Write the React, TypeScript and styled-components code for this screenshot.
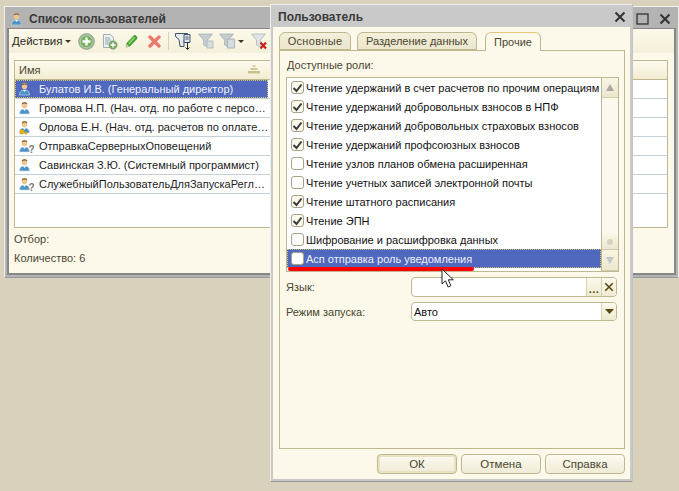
import React from 'react';
import styled, { createGlobalStyle } from 'styled-components';

const Global = createGlobalStyle`
    html, body { margin:0; padding:0; background:#d8d2bd; }
    body { width:679px; height:491px; overflow:hidden; font-family:"Liberation Sans", Arial, sans-serif; font-size:11px; color:#1c1c1c; }
    * { box-sizing:border-box; }
`

const Desktop = styled.div`
    position:relative;
    width:679px;
    height:491px;
    overflow:hidden;
`

const Frame = styled.div<{ $shade: string }>`
    position:absolute;
    display:flex;
    flex-direction:column;
    background:${props => props.$shade};
    border:1px solid #f1f1ec;
    border-bottom-color:#9a9a9a;
`

const BackWindow = styled(Frame)`
    left:4px;
    top:6px;
    width:675px;
    height:272px;
    padding:0 2px 2px 2px;
`

const Dialog = styled(Frame)`
    left:270px;
    top:4px;
    width:362px;
    height:478px;
    padding:0 2px 2px 2px;
    border-right:none;
    box-shadow:1px 0 0 #c4c4c4;
`

const TitleBar = styled.div<{ $height: number; $inset: number }>`
    height:${props => props.$height}px;
    flex:none;
    display:flex;
    align-items:center;
    padding:2px ${props => props.$inset}px 0 ${props => props.$inset}px;
    font-weight:bold;
    font-size:12px;
    color:#3a3a3a;
`

const TitleText = styled.span`
    flex:1;
    margin-left:3px;
`

const Pane = styled.div`
    flex:1;
    min-height:0;
    display:flex;
    flex-direction:column;
    background:#fcf9ea;
`

const BackPane = styled(Pane)`
    border:1px solid #878787;
    border-width:1px 2px 2px 2px;
`

const Toolbar = styled.div`
    height:24px;
    flex:none;
    display:flex;
    align-items:center;
    padding-left:3px;
    background:linear-gradient(#fcf9ea, #f4f0da);
    color:#2c2a1c;
`

const ToolSlot = styled.span<{ $width: number }>`
    width:${props => props.$width}px;
    flex:none;
    display:flex;
    align-items:center;
    justify-content:center;
`

const MenuLabel = styled.span`
    display:flex;
    align-items:center;
    gap:3px;
    width:64px;
    font-size:11.5px;
`

const Caret = styled.i`
    display:inline-block;
    width:0;
    height:0;
    border:3px solid transparent;
    border-top:3px solid #3a3620;
    border-bottom:none;
`

const Divider = styled.span`
    width:1px;
    height:18px;
    background:#d6d2bc;
    flex:none;
`

const Table = styled.div`
    margin:7px 6px 0 5px;
    height:168px;
    flex:none;
    border:1px solid #bdb88f;
    background:#fff;
    overflow:hidden;
`

const TableHead = styled.div`
    height:19px;
    background:linear-gradient(#fdfbee, #f2ecd0);
    border-bottom:1px solid #bdb88f;
    color:#4a4630;
`

const HeadCell = styled.div`
    width:253px;
    height:100%;
    display:flex;
    align-items:center;
    justify-content:space-between;
    padding:0 8px 1px 4px;
`

const UserRow = styled.div`
    height:19px;
    border-bottom:1px solid #c6d0d8;
`

const UserCell = styled.div<{ $selected?: boolean }>`
    width:253px;
    height:100%;
    display:flex;
    align-items:center;
    white-space:nowrap;
    overflow:hidden;
    padding-left:3px;
    gap:5px;
    background:${props => props.$selected ? '#5068bd' : '#fff'};
    color:${props => props.$selected ? '#f0f2fa' : '#1c1c1c'};
    outline:${props => props.$selected ? '1px dotted #d8c860' : 'none'};
    outline-offset:-1px;
`

const Footer = styled.div`
    padding:5px 5px 0 5px;
    display:flex;
    flex-direction:column;
    gap:6px;
    color:#4a4630;
`

const FooterLine = styled.div`
    height:13px;
    line-height:13px;
`

const WinButton = styled.span<{ $gap?: number }>`
    display:flex;
    width:16px;
    justify-content:center;
    margin-left:${props => props.$gap ?? 0}px;
`

const DialogPane = styled(Pane)`
    padding:5px 5px 0 6px;
`

const Tabs = styled.div`
    display:flex;
    height:19px;
    flex:none;
    position:relative;
    z-index:1;
`

const Tab = styled.div<{ $width: number; $gap: number; $track?: number; $active?: boolean }>`
    width:${props => props.$width}px;
    margin-right:${props => props.$gap}px;
    height:${props => props.$active ? 19 : 18}px;
    display:flex;
    align-items:center;
    justify-content:center;
    letter-spacing:${props => props.$track ?? 0}px;
    border:1px solid #bdb88f;
    border-top-color:${props => props.$active ? '#e6c87a' : '#bdb88f'};
    border-bottom:${props => props.$active ? 'none' : '1px solid #bdb88f'};
    border-radius:6px 6px 0 0;
    background:${props => props.$active ? '#fcf9ea' : 'linear-gradient(#f3efda, #ebe6cc)'};
    color:#4a4630;
`

const TabPanel = styled.div`
    height:399px;
    margin-top:-1px;
    flex:none;
    border:1px solid #bdb88f;
    padding:8px 5px 0 6px;
    display:flex;
    flex-direction:column;
`

const Caption = styled.div`
    height:13px;
    line-height:13px;
    color:#4a4630;
    margin-left:1px;
`

const RoleBox = styled.div`
    margin-top:5px;
    height:195px;
    width:333px;
    flex:none;
    display:flex;
    border:1px solid #bdb88f;
    background:#fff;
    position:relative;
`

const RoleList = styled.div`
    flex:1;
    min-width:0;
`

const RoleRow = styled.div<{ $selected?: boolean }>`
    height:19px;
    display:flex;
    align-items:center;
    padding-left:4px;
    gap:2px;
    white-space:nowrap;
    background:${props => props.$selected ? '#5068bd' : 'transparent'};
    color:${props => props.$selected ? '#eef0f8' : '#111'};
    outline:${props => props.$selected ? '1px dotted #c8c070' : 'none'};
    outline-offset:-1px;
`

const Check = styled.span<{ $filled?: boolean }>`
    width:13px;
    height:13px;
    flex:none;
    display:flex;
    align-items:center;
    justify-content:center;
    border:1px solid #a8a386;
    border-radius:3px;
    background:${props => props.$filled ? '#fbf9ee' : '#fff'};
`

const ScrollTrack = styled.div`
    width:17px;
    flex:none;
    display:flex;
    flex-direction:column;
    border-left:1px solid #bdb88f;
    background:#faf8ef;
`

const ScrollCap = styled.div<{ $height: number }>`
    height:${props => props.$height}px;
    flex:none;
    display:flex;
    align-items:center;
    justify-content:center;
    background:linear-gradient(#f8f5e4, #ece7ce);
    border-bottom:1px solid #cfcaa8;
`

const ScrollFill = styled.div`
    flex:1;
`

const Arrow = styled.i<{ $down?: boolean }>`
    display:block;
    width:0;
    height:0;
    border:4px solid transparent;
    ${props => props.$down
        ? 'border-top:7px solid #c6c6c6; border-bottom:none;'
        : 'border-bottom:7px solid #a8a8a0; border-top:none;'}
`

const ThumbGrip = styled.i`
    display:block;
    width:6px;
    height:6px;
    border-radius:50%;
    background:#d4d2c4;
`

const Underline = styled.div`
    position:absolute;
    left:1px;
    top:189px;
    width:186px;
    height:4px;
    border-radius:2px;
    background:#f00;
`

const Cursor = styled.svg`
    position:absolute;
    left:441px;
    top:268px;
`

const FieldRow = styled.div<{ $top: number; $height: number }>`
    display:flex;
    align-items:center;
    margin-top:${props => props.$top}px;
    height:${props => props.$height}px;
    flex:none;
`

const FieldLabel = styled.div`
    width:125px;
    flex:none;
    color:#4a4630;
`

const Field = styled.div`
    width:206px;
    height:100%;
    display:flex;
    align-items:stretch;
    border:1px solid #bdb88f;
    border-radius:4px;
    background:#fff;
    overflow:hidden;
`

const FieldValue = styled.div`
    flex:1;
    padding-left:2px;
    display:flex;
    align-items:center;
    color:#111;
`

const FieldButton = styled.div`
    width:15px;
    flex:none;
    display:flex;
    align-items:center;
    justify-content:center;
    border-left:1px solid #d6d2b4;
    background:linear-gradient(#fbf9ec, #efead2);
    font-weight:bold;
    color:#5a4a10;
`

const Dots = styled.span`
    letter-spacing:0.5px;
    margin-top:3px;
`

const ButtonBar = styled.div`
    display:flex;
    justify-content:flex-end;
    gap:4px;
    margin:5px 0 0 0;
    flex:none;
`

const PushButton = styled.div<{ $default?: boolean }>`
    width:80px;
    height:20px;
    display:flex;
    align-items:center;
    justify-content:center;
    border:1px solid #bdb88f;
    border-radius:4px;
    background:linear-gradient(#fdfbf0, #efebd6);
    box-shadow:${props => props.$default ? 'inset 0 0 0 2px #e8e2c0' : 'none'};
    color:#4a4630;
    font-size:11.5px;
`

const UserIcon = ({ kind }: { kind?: 'key' | 'ask' }) => (
    <svg width="16" height="16" viewBox="0 0 16 16" style={{ flex: 'none' }}>
        <path d="M1.500 14c0-3.500 2-5 4-5h2c2 0 4 1.500 4 5z" fill="#4d94c4" stroke="#cfe3f0" strokeWidth=".6" />
        <path d="M5 9l1.500 2L8 9z" fill="#fff" />
        <ellipse cx="6.500" cy="5" rx="2.700" ry="3.200" fill="#f2c48e" />
        <path d="M3.700 4.600C3.500 1.800 9.500 1.300 9.300 4.600 8 3.200 5.300 3.200 3.700 4.600z" fill="#7a5a30" />
        {kind === 'key' && <path d="M2 15V11h4v2h3v2H7v-1H5v1z" fill="#eeb410" stroke="#b88a08" strokeWidth=".4" />}
        {kind === 'ask' && <text x="10.500" y="15" fontSize="10" fontWeight="bold" fontFamily="Liberation Sans" fill="#7b7b70">?</text>}
    </svg>
)

const PlusIcon = () => (
    <svg width="17" height="17" viewBox="0 0 17 17">
        <circle cx="8.500" cy="8.500" r="7.800" fill="#a9c4a0" stroke="#8a9a80" />
        <circle cx="8.500" cy="8.500" r="5.500" fill="#74b05e" />
        <path d="M8.500 4.500v8M4.500 8.500h8" stroke="#fff" strokeWidth="2.400" />
    </svg>
)

const CopyIcon = () => (
    <svg width="17" height="17" viewBox="0 0 17 17">
        <path d="M2.500 1.500h7l3 3v10h-10z" fill="#eef1f2" stroke="#9fb0b4" />
        <path d="M4 5h5M4 7h6M4 9h4M4 11h3" stroke="#8ea4b0" />
        <circle cx="12" cy="12" r="4.200" fill="#77ad62" stroke="#8a9a80" strokeWidth=".6" />
        <path d="M12 9.500v5M9.500 12h5" stroke="#fff" strokeWidth="1.400" />
    </svg>
)

const PencilIcon = () => (
    <svg width="14" height="14" viewBox="0 0 14 14">
        <path d="M1 13l1-4 7-7.500c1-.8 3.500 1.500 3 3L5 12z" fill="#3fa02e" stroke="#2e7a24" strokeWidth=".5" />
        <path d="M3 9l6-6.500 1.500 1.500L4.500 10.500z" fill="#86d060" />
        <path d="M1 13l.8-3 2.200 2.200z" fill="#e4d8a0" />
    </svg>
)

const CrossIcon = () => (
    <svg width="13" height="13" viewBox="0 0 13 13">
        <path d="M2 2l9 9M11 2l-9 9" stroke="#ec7a6c" strokeWidth="3.400" strokeLinecap="round" />
    </svg>
)

const FunnelIcon = ({ color, badge }: { color: string; badge?: 'list' | 'clear' | 'edit' }) => (
    <svg width="18" height="18" viewBox="0 0 18 18">
        <path d="M1.500 2h14l-5 6v7l-4-2V8z" fill={color} stroke="#9aa4a8" strokeWidth=".6" />
        {badge === 'list' && <path d="M9.500 7h7v9h-7z" fill="#d6dde0" stroke="#aab4b8" />}
        {badge === 'edit' && <path d="M10 9h6v7h-6z" fill="#d6dde0" stroke="#b4bcc0" />}
        {badge === 'clear' && <path d="M10.500 10.500l5.500 6M16 10.500l-5.500 6" stroke="#c8201c" strokeWidth="2.200" />}
    </svg>
)

const SetupIcon = () => (
    <svg width="18" height="19" viewBox="0 0 18 19">
        <path d="M1.500 1.500h12v3l-3.500 4v6H6l-1-7-3.500-3z" fill="#e6ecef" stroke="#3c5268" />
        <path d="M10 2.500h6v8h-6z" fill="#dfe7ec" stroke="#3c5268" />
        <path d="M11.500 5h3M11.500 7h3" stroke="#3c5268" />
        <path d="M13.500 10v7M11.500 15.500l2 2 2-2" stroke="#222" fill="none" />
    </svg>
)

const SortIcon = () => (
    <svg width="12" height="9" viewBox="0 0 12 9">
        <path d="M4.500 0h3v2h-3z" fill="#d9d2a6" />
        <path d="M2.500 3h7v2h-7z" fill="#cfc796" />
        <path d="M0 6h12v2.500H0z" fill="#c8c08c" />
    </svg>
)

const TickMark = () => (
    <svg width="11" height="10" viewBox="0 0 11 10">
        <path d="M1.500 5l3 3 5-6.500" fill="none" stroke="#3a3a3a" strokeWidth="2" />
    </svg>
)

const SmallX = ({ color, size }: { color: string; size: number }) => (
    <svg width={size} height={size} viewBox="0 0 12 12">
        <path d="M1.500 1.500l9 9M10.500 1.500l-9 9" stroke={color} strokeWidth="2" />
    </svg>
)

const users: { name: string; kind?: 'key' | 'ask' }[] = [
    { name: 'Булатов И.В. (Генеральный директор)' },
    { name: 'Громова Н.П. (Нач. отд. по работе с персо…' },
    { name: 'Орлова Е.Н. (Нач. отд. расчетов по оплате…', kind: 'key' },
    { name: 'ОтправкаСерверныхОповещений', kind: 'ask' },
    { name: 'Савинская З.Ю. (Системный программист)' },
    { name: 'СлужебныйПользовательДляЗапускаРегл…', kind: 'ask' },
];

const roles: { name: string; on: boolean }[] = [
    { name: 'Чтение удержаний в счет расчетов по прочим операциям', on: true },
    { name: 'Чтение удержаний добровольных взносов в НПФ', on: true },
    { name: 'Чтение удержаний добровольных страховых взносов', on: true },
    { name: 'Чтение удержаний профсоюзных взносов', on: true },
    { name: 'Чтение узлов планов обмена расширенная', on: false },
    { name: 'Чтение учетных записей электронной почты', on: false },
    { name: 'Чтение штатного расписания', on: true },
    { name: 'Чтение ЭПН', on: true },
    { name: 'Шифрование и расшифровка данных', on: false },
    { name: 'Асп отправка роль уведомления', on: false },
];

const App = () => (
    <Desktop>
        <Global />
        <BackWindow $shade="#b3b3b3">
            <TitleBar $height={21} $inset={3}>
                <UserIcon />
                <TitleText>Список пользователей</TitleText>
                <WinButton>
                    <svg width="14" height="14" viewBox="0 0 14 14">
                        <rect x="1" y="2" width="11" height="10" fill="none" stroke="#333" strokeWidth="1.300" />
                    </svg>
                </WinButton>
                <WinButton $gap={6}><SmallX color="#333" size={12} /></WinButton>
            </TitleBar>
            <BackPane>
                <Toolbar>
                    <MenuLabel>Действия <Caret /></MenuLabel>
                    <ToolSlot $width={20}><PlusIcon /></ToolSlot>
                    <ToolSlot $width={27}><CopyIcon /></ToolSlot>
                    <ToolSlot $width={18}><PencilIcon /></ToolSlot>
                    <ToolSlot $width={27}><CrossIcon /></ToolSlot>
                    <Divider />
                    <ToolSlot $width={27}><SetupIcon /></ToolSlot>
                    <ToolSlot $width={20}><FunnelIcon color="#c4ccce" badge="edit" /></ToolSlot>
                    <ToolSlot $width={22}><FunnelIcon color="#c4ccce" badge="list" /></ToolSlot>
                    <ToolSlot $width={6}><Caret /></ToolSlot>
                    <ToolSlot $width={30}><FunnelIcon color="#dfe4e6" badge="clear" /></ToolSlot>
                </Toolbar>
                <Table>
                    <TableHead><HeadCell>Имя<SortIcon /></HeadCell></TableHead>
                    {users.map((user, index) => (
                        <UserRow key={user.name}>
                            <UserCell $selected={index === 0}>
                                <UserIcon kind={user.kind} />
                                {user.name}
                            </UserCell>
                        </UserRow>
                    ))}
                </Table>
                <Footer>
                    <FooterLine>Отбор:</FooterLine>
                    <FooterLine>Количество: 6</FooterLine>
                </Footer>
            </BackPane>
        </BackWindow>
        <Dialog $shade="#c9c9c9">
            <TitleBar $height={22} $inset={2}>
                <TitleText>Пользователь</TitleText>
                <WinButton><SmallX color="#333" size={12} /></WinButton>
            </TitleBar>
            <DialogPane>
                <Tabs>
                    <Tab $width={72} $gap={6} $track={0.3}>Основные</Tab>
                    <Tab $width={120} $gap={8}>Разделение данных</Tab>
                    <Tab $width={56} $gap={0} $active>Прочие</Tab>
                </Tabs>
                <TabPanel>
                    <Caption>Доступные роли:</Caption>
                    <RoleBox>
                        <RoleList>
                            {roles.map((role, index) => (
                                <RoleRow key={role.name} $selected={index === roles.length - 1}>
                                    <Check $filled={role.on}>{role.on && <TickMark />}</Check>
                                    {role.name}
                                </RoleRow>
                            ))}
                        </RoleList>
                        <ScrollTrack>
                            <ScrollCap $height={20}><Arrow /></ScrollCap>
                            <ScrollFill />
                            <ScrollCap $height={15}><ThumbGrip /></ScrollCap>
                            <ScrollCap $height={21}><Arrow $down /></ScrollCap>
                        </ScrollTrack>
                        <Underline />
                    </RoleBox>
                    <FieldRow $top={5} $height={20}>
                        <FieldLabel>Язык:</FieldLabel>
                        <Field>
                            <FieldValue />
                            <FieldButton><Dots>...</Dots></FieldButton>
                            <FieldButton><SmallX color="#5a4a10" size={10} /></FieldButton>
                        </Field>
                    </FieldRow>
                    <FieldRow $top={5} $height={19}>
                        <FieldLabel>Режим запуска:</FieldLabel>
                        <Field>
                            <FieldValue>Авто</FieldValue>
                            <FieldButton>
                                <svg width="9" height="5" viewBox="0 0 9 5"><path d="M0 0h9L4.500 5z" fill="#5a4a10" /></svg>
                            </FieldButton>
                        </Field>
                    </FieldRow>
                </TabPanel>
                <ButtonBar>
                    <PushButton $default>ОК</PushButton>
                    <PushButton>Отмена</PushButton>
                    <PushButton>Справка</PushButton>
                </ButtonBar>
            </DialogPane>
        </Dialog>
        <Cursor width="14" height="21" viewBox="0 0 14 21">
            <path d="M1 1v15l3.500-3.200 2.600 6.200 2.800-1.200-2.600-6h5z" fill="#fff" stroke="#222" strokeWidth="1" />
        </Cursor>
    </Desktop>
);

export default App;
